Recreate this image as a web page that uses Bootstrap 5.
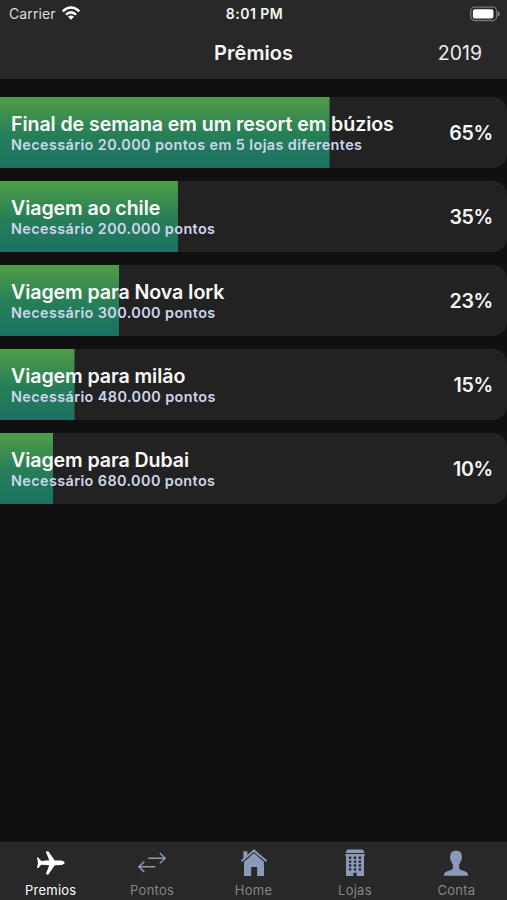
<!DOCTYPE html>
<html lang="pt-BR">
<head>
<meta charset="utf-8">
<meta name="viewport" content="width=device-width, initial-scale=1">
<title>Prêmios</title>
<link href="https://cdn.jsdelivr.net/npm/bootstrap@5.3.0/dist/css/bootstrap.min.css" rel="stylesheet">
<style>
  body { font-family: Inter, "Liberation Sans", sans-serif; background: #101010; color: #f7f7f7; }
  .top-bar { height: 79px; background: #282828; border-bottom: 1px solid #202020; }
  .status-line { height: 27px; padding: 0 7px 0 9px; }
  .carrier { font-size: 14px; line-height: 27px; color: #dedede; letter-spacing: .1px; margin-top: -2px; }
  .signal { margin-left: 5px; margin-top: -2px; }
  .clock { font-size: 14px; line-height: 28px; font-weight: 600; letter-spacing: .5px; }
  .title-line { height: 51px; padding-right: 25px; }
  .screen-title { font-size: 20px; line-height: 52px; font-weight: 600; letter-spacing: .05px; margin-left: 1px; }
  .year { font-size: 19.5px; line-height: 52px; color: #ededed; }
  .prizes { padding-top: 18.4px; gap: 13.5px; }
  .prize { height: 70.5px; padding: 1px 14px 0 11px; border-radius: 0 14px 14px 0;
    background: linear-gradient(#509d48 0%, #277f57 52%, #1b7163 100%) no-repeat #222; }
  .prize-name { font-size: 19.6px; line-height: 23px; font-weight: 600; letter-spacing: -.08px; color: #fafafa; }
  .prize-need { font-size: 14.4px; line-height: 18px; font-weight: 600; letter-spacing: .4px; color: #cfd6ee; }
  .prize-share { font-size: 19.6px; line-height: 24px; font-weight: 600; letter-spacing: -.3px; }
  .tab-bar { height: 58px; background: #282828; border-top: 1px solid #303030; }
  .tab { color: #858585; font-size: 13px; line-height: 16px; letter-spacing: .25px; padding-top: 4px; }
  .tab svg { color: #8b9ab8; margin-bottom: 3px; }
  .tab.current, .tab.current svg { color: #fff; }
</style>
</head>
<body class="vh-100 d-flex flex-column overflow-hidden">
<header class="top-bar flex-shrink-0">
  <div class="status-line row g-0 align-items-center">
    <div class="col d-flex align-items-center"><span class="carrier">Carrier</span>
      <svg class="signal" width="20" height="16" viewBox="0 0 20 16" fill="none" stroke="#fff" stroke-width="2.5"><path d="M1.7 6.3Q10-1.3 18.3 6.3M4.9 9.6Q10 5.1 15.1 9.6"/><path d="M7 11.7Q10 9.5 13 11.7L10 14.7Z" fill="#fff" stroke="none"/></svg>
    </div>
    <div class="col-auto clock">8:01 PM</div>
    <div class="col d-flex justify-content-end">
      <svg width="31" height="16" viewBox="0 0 31 16"><rect x="1.7" y="1.2" width="26" height="13.3" rx="4" fill="none" stroke="#757575" stroke-width="1.3"/><rect x="3.9" y="3.2" width="20.5" height="9.4" rx="2" fill="#fff"/><path d="M28.7 5.3Q30.9 6 30.9 8T28.7 10.4Z" fill="#858585"/></svg>
    </div>
  </div>
  <div class="title-line row g-0 align-items-center">
    <div class="col ps-4"></div>
    <h1 class="col-auto screen-title mb-0">Prêmios</h1>
    <div class="col text-end year">2019</div>
  </div>
</header>
<main class="prizes d-flex flex-column flex-grow-1">
  <div class="prize d-flex align-items-center justify-content-between" style="background-size:65% 100%">
    <div><div class="prize-name">Final de semana em um resort em búzios</div><div class="prize-need">Necessário 20.000 pontos em 5 lojas diferentes</div></div>
    <div class="prize-share">65%</div>
  </div>
  <div class="prize d-flex align-items-center justify-content-between" style="background-size:35.1% 100%">
    <div><div class="prize-name">Viagem ao chile</div><div class="prize-need">Necessário 200.000 pontos</div></div>
    <div class="prize-share">35%</div>
  </div>
  <div class="prize d-flex align-items-center justify-content-between" style="background-size:23.5% 100%">
    <div><div class="prize-name">Viagem para Nova Iork</div><div class="prize-need">Necessário 300.000 pontos</div></div>
    <div class="prize-share">23%</div>
  </div>
  <div class="prize d-flex align-items-center justify-content-between" style="background-size:14.7% 100%">
    <div><div class="prize-name">Viagem para milão</div><div class="prize-need">Necessário 480.000 pontos</div></div>
    <div class="prize-share">15%</div>
  </div>
  <div class="prize d-flex align-items-center justify-content-between" style="background-size:10.5% 100%">
    <div><div class="prize-name">Viagem para Dubai</div><div class="prize-need">Necessário 680.000 pontos</div></div>
    <div class="prize-share">10%</div>
  </div>
</main>
<nav class="tab-bar row g-0 flex-shrink-0 text-center">
  <div class="col tab current d-flex flex-column align-items-center">
    <svg width="32" height="32" viewBox="0 0 32 32" fill="currentColor"><path d="M14.3 13.3L11 5.2Q11 4.2 12 4.2H13.3L19.8 13.4L26.5 13.6Q29.6 14.3 29.8 15.8Q29.6 17.3 26.5 18L19.8 18.2L13.3 27.4H12Q11 27.4 11 26.4L14.3 18.3L6.3 17.7L3.2 21H2L3 15.8L2 10.6H3.2L6.3 13.9Z"/></svg>
    <span>Premios</span>
  </div>
  <div class="col tab d-flex flex-column align-items-center">
    <svg width="32" height="32" viewBox="0 0 32 32" fill="none" stroke="currentColor" stroke-width="1.5" stroke-linecap="round" stroke-linejoin="round"><path d="M12.8 11.2H29M24.3 6.5L29.2 11.2L24.3 15.8M18.8 19.7H3M7.7 15.1L2.8 19.7L7.7 24.4"/></svg>
    <span>Pontos</span>
  </div>
  <div class="col tab d-flex flex-column align-items-center">
    <svg width="32" height="32" viewBox="0 0 32 32" fill="currentColor"><path d="M16 5.9L26 14.8V29.1H19.1V20H13.2V29.1H6V14.8Z"/><path d="M3.8 14L16 3.5L28.2 14" fill="none" stroke="#282828" stroke-width="3.6"/><path d="M5.4 4.2H9.4V8.3L5.4 11.8Z"/><path d="M4 13.7L16 3.6L28 13.7" fill="none" stroke="currentColor" stroke-width="2" stroke-linecap="round"/></svg>
    <span>Home</span>
  </div>
  <div class="col tab d-flex flex-column align-items-center">
    <svg width="32" height="32" viewBox="0 0 32 32"><path d="M8.5 2.4H23.5L25.2 4.6V6H6.8V4.6ZM6.2 7H25.8V8.5L25 9.5V29.1H17.7V25.7H14.3V29.1H7V9.5L6.2 8.5Z" fill="currentColor"/><path d="M11.1 9.5V23.5M16 9.5V23.5M20.9 9.5V23.5" stroke="#282828" stroke-width="2.4" stroke-dasharray="2.4 1.5" fill="none"/></svg>
    <span>Lojas</span>
  </div>
  <div class="col tab d-flex flex-column align-items-center">
    <svg width="32" height="32" viewBox="0 0 32 32" fill="currentColor"><path d="M16 3.7C20.3 3.7 22 6 21.7 9.7Q22.4 10.3 21.8 12Q21.5 13.4 20.8 13.8Q20.5 16.3 19.1 17.6V20.5C19.1 22.5 20.5 23 23.3 23.8C26.5 24.8 28 25.8 28.2 28.8H3.8C4 25.8 5.5 24.8 8.7 23.8C11.5 23 12.9 22.5 12.9 20.5V17.6Q11.5 16.3 11.2 13.8Q10.5 13.4 10.2 12Q9.6 10.3 10.3 9.7C10 6 11.7 3.7 16 3.7Z"/></svg>
    <span>Conta</span>
  </div>
</nav>
<script src="https://cdn.jsdelivr.net/npm/bootstrap@5.3.0/dist/js/bootstrap.bundle.min.js"></script>
</body>
</html>
